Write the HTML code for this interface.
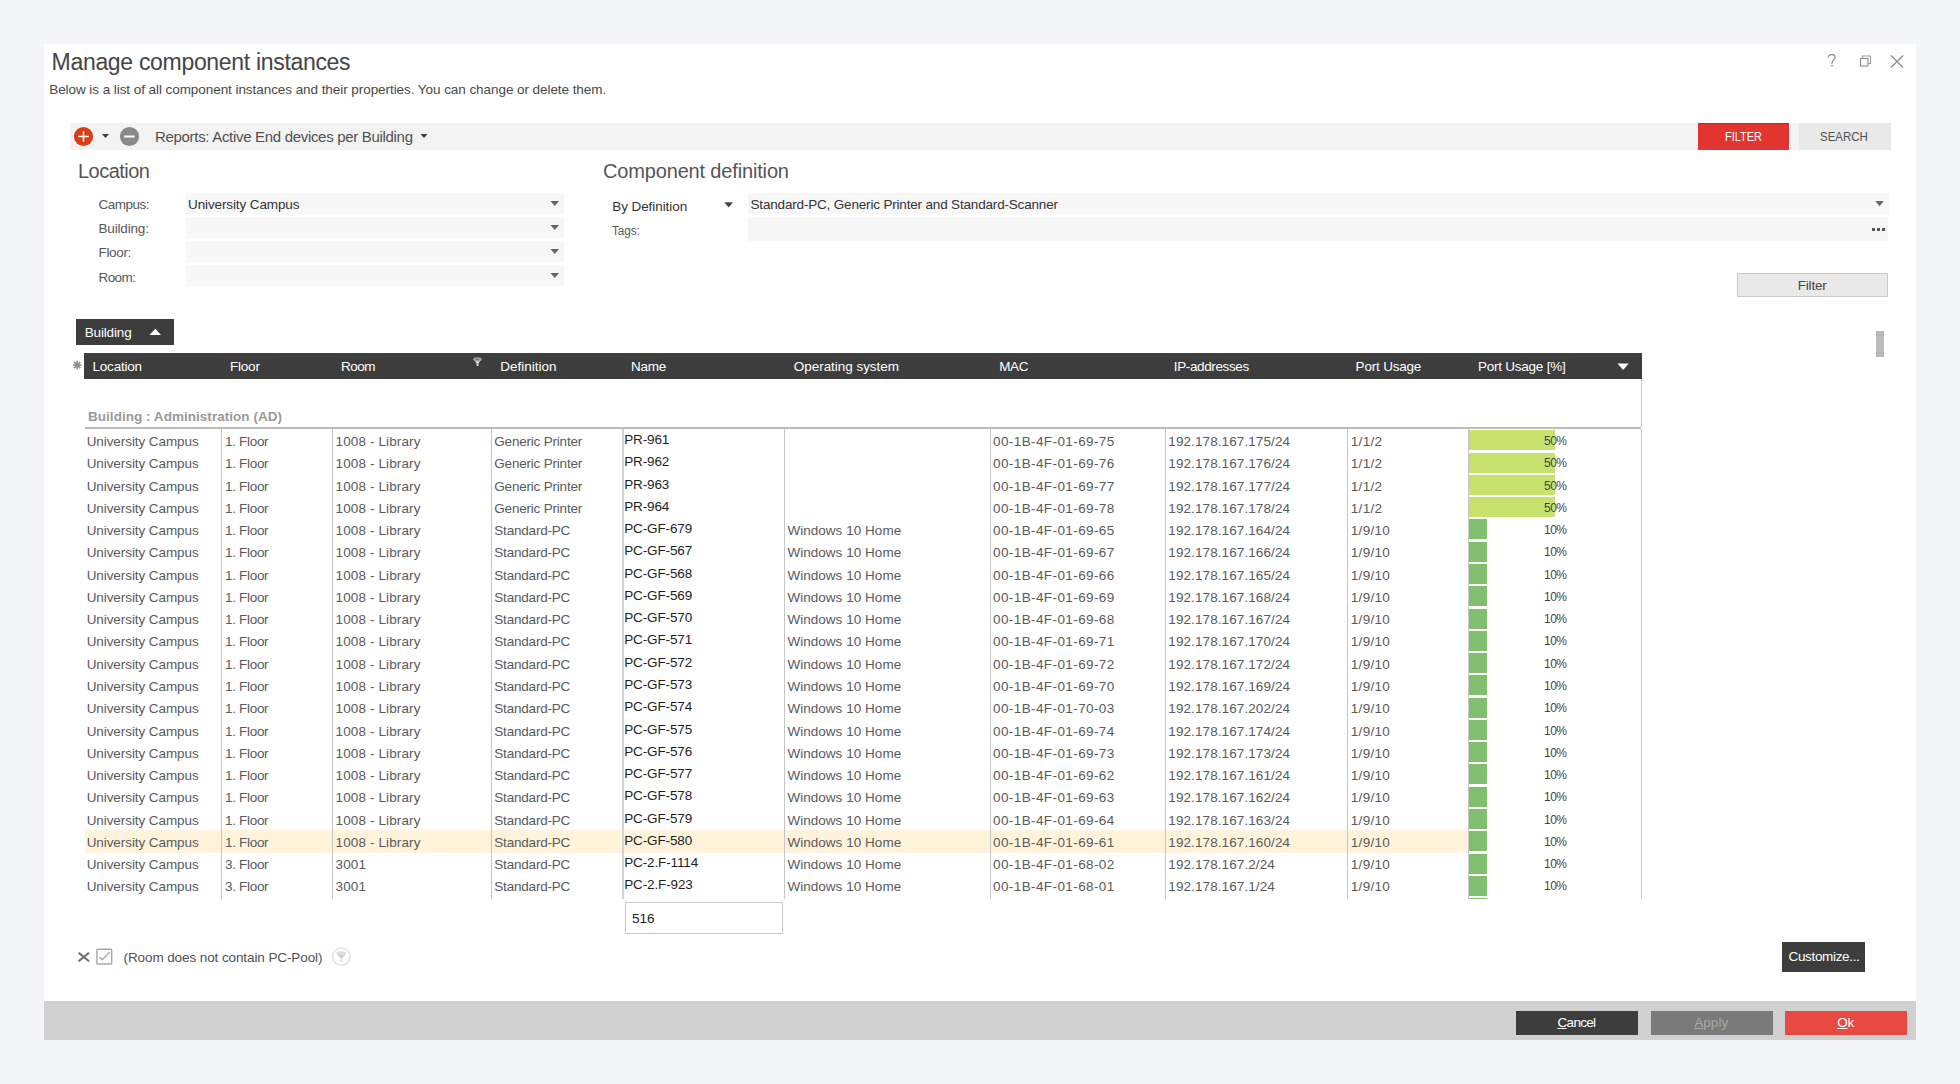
<!DOCTYPE html>
<html><head><meta charset="utf-8"><style>
html,body{margin:0;padding:0;}
body{width:1960px;height:1084px;background:#f4f5f9;position:relative;overflow:hidden;font-family:"Liberation Sans", sans-serif;}
.t{position:absolute;white-space:nowrap;}
.r{position:absolute;}
</style></head><body>
<div class="r" style="left:44px;top:44px;width:1872px;height:996px;background:#ffffff;"></div>
<div class="t" style="left:51.6px;top:51.00px;font-size:23px;line-height:23px;color:#454545;letter-spacing:-0.315px;font-weight:400;">Manage component instances</div>
<div class="t" style="left:49.2px;top:83.00px;font-size:13.5px;line-height:13.5px;color:#484848;letter-spacing:-0.062px;font-weight:400;">Below is a list of all component instances and their properties. You can change or delete them.</div>
<svg class="r" style="left:1820px;top:48px" width="100" height="26" viewBox="0 0 100 26"><path d="M8.3 9.4 C8.3 7.5 9.9 6.6 11.7 6.6 C13.5 6.6 15.1 7.6 15.1 9.4 C15.1 11.7 12 12.1 12 15 L12 15.8" fill="none" stroke="#8a8a8a" stroke-width="1.25"/><circle cx="12" cy="17.6" r="0.85" fill="#8a8a8a"/><rect x="40.5" y="10.5" width="7.5" height="7.5" fill="none" stroke="#8a8a8a" stroke-width="1.1"/><path d="M42.5 10.5 V8 H50.5 V15.5 H48" fill="none" stroke="#9a9a9a" stroke-width="1.1"/><path d="M71 7.5 L83 19.5 M83 7.5 L71 19.5" stroke="#8a8a8a" stroke-width="1.3"/></svg>
<div class="r" style="left:70px;top:123px;width:1821px;height:27px;background:#f3f3f3;"></div>
<svg class="r" style="left:70px;top:123px" width="370" height="27" viewBox="0 0 370 27"><circle cx="13.5" cy="13.5" r="9.6" fill="#dc3e14"/><path d="M8.2 13.5 H18.8 M13.5 8.2 V18.8" stroke="#fff" stroke-width="1.5"/><path d="M32 11 L39 11 L35.5 15 Z" fill="#3a3a3a"/><circle cx="59.5" cy="13.5" r="9.6" fill="#8a8a8a"/><path d="M54.2 13.5 H64.6" stroke="#fff" stroke-width="2"/></svg>
<div class="t" style="left:155.0px;top:129.00px;font-size:15px;line-height:15px;color:#505050;letter-spacing:-0.312px;font-weight:400;">Reports: Active End devices per Building</div>
<svg class="r" style="left:418px;top:130px" width="12" height="10"><path d="M2.5 4 L9.5 4 L6 8 Z" fill="#3a3a3a"/></svg>
<div class="r" style="left:1698px;top:123px;width:91px;height:27px;background:#e3352f;border-top:1px solid #b52a25;box-sizing:border-box"></div>
<div class="t" style="left:1724.8px;top:130.00px;font-size:13.5px;line-height:13.5px;color:#ffffff;letter-spacing:0.000px;font-weight:400;transform:scaleX(0.8129);transform-origin:0 0;">FILTER</div>
<div class="r" style="left:1799px;top:123px;width:92px;height:27px;background:#e9e9e9;"></div>
<div class="t" style="left:1819.7px;top:130.00px;font-size:13.5px;line-height:13.5px;color:#505050;letter-spacing:0.000px;font-weight:400;transform:scaleX(0.8478);transform-origin:0 0;">SEARCH</div>
<div class="t" style="left:78.0px;top:161.00px;font-size:20px;line-height:20px;color:#555;letter-spacing:-0.518px;font-weight:400;">Location</div>
<div class="t" style="left:98.5px;top:198.00px;font-size:13.5px;line-height:13.5px;color:#585858;letter-spacing:-0.489px;font-weight:400;">Campus:</div>
<div class="r" style="left:186px;top:193px;width:378px;height:21px;background:#f7f7f7;"></div>
<svg class="r" style="left:548px;top:196.5px" width="14" height="12"><path d="M2.5 4 L11 4 L6.75 9 Z" fill="#666"/></svg>
<div class="t" style="left:98.5px;top:222.00px;font-size:13.5px;line-height:13.5px;color:#585858;letter-spacing:-0.175px;font-weight:400;">Building:</div>
<div class="r" style="left:186px;top:217px;width:378px;height:21px;background:#f7f7f7;"></div>
<svg class="r" style="left:548px;top:220.5px" width="14" height="12"><path d="M2.5 4 L11 4 L6.75 9 Z" fill="#666"/></svg>
<div class="t" style="left:98.5px;top:246.00px;font-size:13.5px;line-height:13.5px;color:#585858;letter-spacing:-0.343px;font-weight:400;">Floor:</div>
<div class="r" style="left:186px;top:241px;width:378px;height:21px;background:#f7f7f7;"></div>
<svg class="r" style="left:548px;top:244.5px" width="14" height="12"><path d="M2.5 4 L11 4 L6.75 9 Z" fill="#666"/></svg>
<div class="t" style="left:98.5px;top:271.00px;font-size:13.5px;line-height:13.5px;color:#585858;letter-spacing:-0.591px;font-weight:400;">Room:</div>
<div class="r" style="left:186px;top:265px;width:378px;height:21px;background:#f7f7f7;"></div>
<svg class="r" style="left:548px;top:268.5px" width="14" height="12"><path d="M2.5 4 L11 4 L6.75 9 Z" fill="#666"/></svg>
<div class="t" style="left:188.0px;top:198.00px;font-size:13.5px;line-height:13.5px;color:#333;letter-spacing:-0.111px;font-weight:400;">University Campus</div>
<div class="t" style="left:603.0px;top:161.00px;font-size:20px;line-height:20px;color:#555;letter-spacing:-0.159px;font-weight:400;">Component definition</div>
<div class="t" style="left:612.2px;top:200.00px;font-size:13.5px;line-height:13.5px;color:#333;letter-spacing:-0.066px;font-weight:400;">By Definition</div>
<svg class="r" style="left:722px;top:199px" width="14" height="12"><path d="M2.3 3.2 L11 3.2 L6.65 8.5 Z" fill="#444"/></svg>
<div class="t" style="left:612.2px;top:224.00px;font-size:13.5px;line-height:13.5px;color:#585858;letter-spacing:0.000px;font-weight:400;transform:scaleX(0.8643);transform-origin:0 0;">Tags:</div>
<div class="r" style="left:748px;top:193px;width:1141px;height:21px;background:#f7f7f7;"></div>
<div class="t" style="left:750.5px;top:198.00px;font-size:13.5px;line-height:13.5px;color:#333;letter-spacing:-0.175px;font-weight:400;">Standard-PC, Generic Printer and Standard-Scanner</div>
<svg class="r" style="left:1873px;top:197.5px" width="14" height="12"><path d="M2.4 3 L10.7 3 L6.55 8.3 Z" fill="#666"/></svg>
<div class="r" style="left:748px;top:217px;width:1140px;height:24px;background:#f7f7f7;"></div>
<div class="r" style="left:1872px;top:228px;width:3px;height:3px;background:#555;"></div>
<div class="r" style="left:1877px;top:228px;width:3px;height:3px;background:#555;"></div>
<div class="r" style="left:1882px;top:228px;width:3px;height:3px;background:#555;"></div>
<div class="r" style="left:1737px;top:273px;width:151px;height:24px;background:#e9e9e9;border:1px solid #c8c8c8;box-sizing:border-box"></div>
<div class="t" style="left:1797.8px;top:279.00px;font-size:13.5px;line-height:13.5px;color:#444;letter-spacing:-0.220px;font-weight:400;">Filter</div>
<div class="r" style="left:1876px;top:331px;width:8px;height:26px;background:#bababa;"></div>
<div class="r" style="left:76px;top:319px;width:98px;height:26px;background:#3d3d3d;"></div>
<div class="t" style="left:84.7px;top:326.00px;font-size:13.5px;line-height:13.5px;color:#fff;letter-spacing:-0.150px;font-weight:400;">Building</div>
<svg class="r" style="left:148px;top:326px" width="14" height="12"><path d="M1.5 9 L13 9 L7.25 2.8 Z" fill="#fff"/></svg>
<svg class="r" style="left:72px;top:360px" width="11" height="11" viewBox="0 0 11 11"><path d="M5.2 0.8 V9.2 M0.9 5 H9.5 M2.1 1.9 L8.3 8.1 M2.1 8.1 L8.3 1.9" stroke="#8c8c8c" stroke-width="1.5"/><circle cx="5.2" cy="5" r="2.2" fill="#8c8c8c"/></svg>
<div class="r" style="left:84px;top:353px;width:1558px;height:26px;background:#3d3d3d;"></div>
<div class="t" style="left:92.5px;top:360.00px;font-size:13.5px;line-height:13.5px;color:#ffffff;letter-spacing:-0.207px;font-weight:400;">Location</div>
<div class="t" style="left:230.1px;top:360.00px;font-size:13.5px;line-height:13.5px;color:#ffffff;letter-spacing:-0.241px;font-weight:400;">Floor</div>
<div class="t" style="left:341.0px;top:360.00px;font-size:13.5px;line-height:13.5px;color:#ffffff;letter-spacing:-0.505px;font-weight:400;">Room</div>
<div class="t" style="left:500.3px;top:360.00px;font-size:13.5px;line-height:13.5px;color:#ffffff;letter-spacing:0.002px;font-weight:400;">Definition</div>
<div class="t" style="left:631.0px;top:360.00px;font-size:13.5px;line-height:13.5px;color:#ffffff;letter-spacing:-0.239px;font-weight:400;">Name</div>
<div class="t" style="left:793.8px;top:360.00px;font-size:13.5px;line-height:13.5px;color:#ffffff;letter-spacing:-0.040px;font-weight:400;">Operating system</div>
<div class="t" style="left:999.3px;top:360.00px;font-size:13.5px;line-height:13.5px;color:#ffffff;letter-spacing:-0.450px;font-weight:400;">MAC</div>
<div class="t" style="left:1173.8px;top:360.00px;font-size:13.5px;line-height:13.5px;color:#ffffff;letter-spacing:-0.377px;font-weight:400;">IP-addresses</div>
<div class="t" style="left:1355.6px;top:360.00px;font-size:13.5px;line-height:13.5px;color:#ffffff;letter-spacing:-0.194px;font-weight:400;">Port Usage</div>
<div class="t" style="left:1477.9px;top:360.00px;font-size:13.5px;line-height:13.5px;color:#ffffff;letter-spacing:-0.231px;font-weight:400;">Port Usage [%]</div>
<svg class="r" style="left:466px;top:353px" width="24" height="18" viewBox="0 0 24 18"><path d="M7.3 6.3 Q11.5 7.5 15.7 6.3 L12.6 10 L10.4 10 Z" fill="#dcdcdc"/><ellipse cx="11.5" cy="6.2" rx="4.3" ry="2" fill="#9c9c9c"/><ellipse cx="11.5" cy="6.3" rx="1.5" ry="0.6" fill="#6a6a6a"/><rect x="10.6" y="9" width="1.9" height="4" fill="#dedede"/></svg>
<svg class="r" style="left:1615px;top:361px" width="16" height="12"><path d="M2.5 2.5 L13.7 2.5 L8.1 9 Z" fill="#fff"/></svg>
<div class="t" style="left:88.0px;top:410.00px;font-size:13.5px;line-height:13.5px;color:#9a9a9a;letter-spacing:0.035px;font-weight:700;">Building : Administration (AD)</div>
<div class="r" style="left:85px;top:427px;width:1556px;height:2px;background:#bcbcbc;"></div>
<div class="r" style="left:1641px;top:379px;width:1px;height:48px;background:#c6c6c6;"></div>
<div class="r" style="left:85px;top:830px;width:1384px;height:23px;background:#fff4db;"></div>
<div class="r" style="left:221px;top:429px;width:1px;height:470px;background:#c6c6c6;"></div>
<div class="r" style="left:332px;top:429px;width:1px;height:470px;background:#c6c6c6;"></div>
<div class="r" style="left:491px;top:429px;width:1px;height:470px;background:#c6c6c6;"></div>
<div class="r" style="left:784px;top:429px;width:1px;height:470px;background:#c6c6c6;"></div>
<div class="r" style="left:990px;top:429px;width:1px;height:470px;background:#c6c6c6;"></div>
<div class="r" style="left:1165px;top:429px;width:1px;height:470px;background:#c6c6c6;"></div>
<div class="r" style="left:1347px;top:429px;width:1px;height:470px;background:#c6c6c6;"></div>
<div class="r" style="left:1468px;top:429px;width:1px;height:470px;background:#c6c6c6;"></div>
<div class="r" style="left:1641px;top:429px;width:1px;height:470px;background:#c6c6c6;"></div>
<div class="r" style="left:622px;top:429px;width:2px;height:470px;background:#d4d4d4;"></div>
<div class="r" style="left:1469px;top:430px;width:86px;height:20px;background:#c8e26e;"></div>
<div class="t" style="left:86.7px;top:435.00px;font-size:13.5px;line-height:13.5px;color:#5a5a5a;letter-spacing:-0.080px;font-weight:400;">University Campus</div>
<div class="t" style="left:225.0px;top:435.00px;font-size:13.5px;line-height:13.5px;color:#5a5a5a;letter-spacing:-0.312px;font-weight:400;">1. Floor</div>
<div class="t" style="left:335.5px;top:435.00px;font-size:13.5px;line-height:13.5px;color:#5a5a5a;letter-spacing:0.131px;font-weight:400;">1008 - Library</div>
<div class="t" style="left:494.3px;top:435.00px;font-size:13.5px;line-height:13.5px;color:#5a5a5a;letter-spacing:-0.200px;font-weight:400;">Generic Printer</div>
<div class="t" style="left:624.2px;top:433.00px;font-size:13.5px;line-height:13.5px;color:#1e1e1e;letter-spacing:-0.129px;font-weight:400;">PR-961</div>
<div class="t" style="left:993.0px;top:435.00px;font-size:13.5px;line-height:13.5px;color:#5a5a5a;letter-spacing:0.405px;font-weight:400;">00-1B-4F-01-69-75</div>
<div class="t" style="left:1168.3px;top:435.00px;font-size:13.5px;line-height:13.5px;color:#5a5a5a;letter-spacing:0.093px;font-weight:400;">192.178.167.175/24</div>
<div class="t" style="left:1350.8px;top:435.00px;font-size:13.5px;line-height:13.5px;color:#5a5a5a;letter-spacing:0.292px;font-weight:400;">1/1/2</div>
<div class="t" style="left:1500px;width:66.5px;text-align:right;top:435px;font-size:12px;line-height:12px;color:#444;letter-spacing:-0.5px">50%</div>
<div class="r" style="left:1469px;top:453px;width:86px;height:20px;background:#c8e26e;"></div>
<div class="t" style="left:86.7px;top:457.00px;font-size:13.5px;line-height:13.5px;color:#5a5a5a;letter-spacing:-0.080px;font-weight:400;">University Campus</div>
<div class="t" style="left:225.0px;top:457.00px;font-size:13.5px;line-height:13.5px;color:#5a5a5a;letter-spacing:-0.312px;font-weight:400;">1. Floor</div>
<div class="t" style="left:335.5px;top:457.00px;font-size:13.5px;line-height:13.5px;color:#5a5a5a;letter-spacing:0.131px;font-weight:400;">1008 - Library</div>
<div class="t" style="left:494.3px;top:457.00px;font-size:13.5px;line-height:13.5px;color:#5a5a5a;letter-spacing:-0.200px;font-weight:400;">Generic Printer</div>
<div class="t" style="left:624.2px;top:455.00px;font-size:13.5px;line-height:13.5px;color:#1e1e1e;letter-spacing:-0.129px;font-weight:400;">PR-962</div>
<div class="t" style="left:993.0px;top:457.00px;font-size:13.5px;line-height:13.5px;color:#5a5a5a;letter-spacing:0.405px;font-weight:400;">00-1B-4F-01-69-76</div>
<div class="t" style="left:1168.3px;top:457.00px;font-size:13.5px;line-height:13.5px;color:#5a5a5a;letter-spacing:0.093px;font-weight:400;">192.178.167.176/24</div>
<div class="t" style="left:1350.8px;top:457.00px;font-size:13.5px;line-height:13.5px;color:#5a5a5a;letter-spacing:0.292px;font-weight:400;">1/1/2</div>
<div class="t" style="left:1500px;width:66.5px;text-align:right;top:457px;font-size:12px;line-height:12px;color:#444;letter-spacing:-0.5px">50%</div>
<div class="r" style="left:1469px;top:475px;width:86px;height:20px;background:#c8e26e;"></div>
<div class="t" style="left:86.7px;top:480.00px;font-size:13.5px;line-height:13.5px;color:#5a5a5a;letter-spacing:-0.080px;font-weight:400;">University Campus</div>
<div class="t" style="left:225.0px;top:480.00px;font-size:13.5px;line-height:13.5px;color:#5a5a5a;letter-spacing:-0.312px;font-weight:400;">1. Floor</div>
<div class="t" style="left:335.5px;top:480.00px;font-size:13.5px;line-height:13.5px;color:#5a5a5a;letter-spacing:0.131px;font-weight:400;">1008 - Library</div>
<div class="t" style="left:494.3px;top:480.00px;font-size:13.5px;line-height:13.5px;color:#5a5a5a;letter-spacing:-0.200px;font-weight:400;">Generic Printer</div>
<div class="t" style="left:624.2px;top:478.00px;font-size:13.5px;line-height:13.5px;color:#1e1e1e;letter-spacing:-0.129px;font-weight:400;">PR-963</div>
<div class="t" style="left:993.0px;top:480.00px;font-size:13.5px;line-height:13.5px;color:#5a5a5a;letter-spacing:0.405px;font-weight:400;">00-1B-4F-01-69-77</div>
<div class="t" style="left:1168.3px;top:480.00px;font-size:13.5px;line-height:13.5px;color:#5a5a5a;letter-spacing:0.093px;font-weight:400;">192.178.167.177/24</div>
<div class="t" style="left:1350.8px;top:480.00px;font-size:13.5px;line-height:13.5px;color:#5a5a5a;letter-spacing:0.292px;font-weight:400;">1/1/2</div>
<div class="t" style="left:1500px;width:66.5px;text-align:right;top:480px;font-size:12px;line-height:12px;color:#444;letter-spacing:-0.5px">50%</div>
<div class="r" style="left:1469px;top:497px;width:86px;height:20px;background:#c8e26e;"></div>
<div class="t" style="left:86.7px;top:502.00px;font-size:13.5px;line-height:13.5px;color:#5a5a5a;letter-spacing:-0.080px;font-weight:400;">University Campus</div>
<div class="t" style="left:225.0px;top:502.00px;font-size:13.5px;line-height:13.5px;color:#5a5a5a;letter-spacing:-0.312px;font-weight:400;">1. Floor</div>
<div class="t" style="left:335.5px;top:502.00px;font-size:13.5px;line-height:13.5px;color:#5a5a5a;letter-spacing:0.131px;font-weight:400;">1008 - Library</div>
<div class="t" style="left:494.3px;top:502.00px;font-size:13.5px;line-height:13.5px;color:#5a5a5a;letter-spacing:-0.200px;font-weight:400;">Generic Printer</div>
<div class="t" style="left:624.2px;top:500.00px;font-size:13.5px;line-height:13.5px;color:#1e1e1e;letter-spacing:-0.129px;font-weight:400;">PR-964</div>
<div class="t" style="left:993.0px;top:502.00px;font-size:13.5px;line-height:13.5px;color:#5a5a5a;letter-spacing:0.405px;font-weight:400;">00-1B-4F-01-69-78</div>
<div class="t" style="left:1168.3px;top:502.00px;font-size:13.5px;line-height:13.5px;color:#5a5a5a;letter-spacing:0.093px;font-weight:400;">192.178.167.178/24</div>
<div class="t" style="left:1350.8px;top:502.00px;font-size:13.5px;line-height:13.5px;color:#5a5a5a;letter-spacing:0.292px;font-weight:400;">1/1/2</div>
<div class="t" style="left:1500px;width:66.5px;text-align:right;top:502px;font-size:12px;line-height:12px;color:#444;letter-spacing:-0.5px">50%</div>
<div class="r" style="left:1469px;top:519px;width:18px;height:20px;background:#7fbf6e;"></div>
<div class="t" style="left:86.7px;top:524.00px;font-size:13.5px;line-height:13.5px;color:#5a5a5a;letter-spacing:-0.080px;font-weight:400;">University Campus</div>
<div class="t" style="left:225.0px;top:524.00px;font-size:13.5px;line-height:13.5px;color:#5a5a5a;letter-spacing:-0.312px;font-weight:400;">1. Floor</div>
<div class="t" style="left:335.5px;top:524.00px;font-size:13.5px;line-height:13.5px;color:#5a5a5a;letter-spacing:0.131px;font-weight:400;">1008 - Library</div>
<div class="t" style="left:494.3px;top:524.00px;font-size:13.5px;line-height:13.5px;color:#5a5a5a;letter-spacing:-0.200px;font-weight:400;">Standard-PC</div>
<div class="t" style="left:624.2px;top:522.00px;font-size:13.5px;line-height:13.5px;color:#1e1e1e;letter-spacing:-0.129px;font-weight:400;">PC-GF-679</div>
<div class="t" style="left:787.4px;top:524.00px;font-size:13.5px;line-height:13.5px;color:#5a5a5a;letter-spacing:0.036px;font-weight:400;">Windows 10 Home</div>
<div class="t" style="left:993.0px;top:524.00px;font-size:13.5px;line-height:13.5px;color:#5a5a5a;letter-spacing:0.405px;font-weight:400;">00-1B-4F-01-69-65</div>
<div class="t" style="left:1168.3px;top:524.00px;font-size:13.5px;line-height:13.5px;color:#5a5a5a;letter-spacing:0.093px;font-weight:400;">192.178.167.164/24</div>
<div class="t" style="left:1350.8px;top:524.00px;font-size:13.5px;line-height:13.5px;color:#5a5a5a;letter-spacing:0.292px;font-weight:400;">1/9/10</div>
<div class="t" style="left:1500px;width:66.5px;text-align:right;top:524px;font-size:12px;line-height:12px;color:#444;letter-spacing:-0.5px">10%</div>
<div class="r" style="left:1469px;top:542px;width:18px;height:20px;background:#7fbf6e;"></div>
<div class="t" style="left:86.7px;top:546.00px;font-size:13.5px;line-height:13.5px;color:#5a5a5a;letter-spacing:-0.080px;font-weight:400;">University Campus</div>
<div class="t" style="left:225.0px;top:546.00px;font-size:13.5px;line-height:13.5px;color:#5a5a5a;letter-spacing:-0.312px;font-weight:400;">1. Floor</div>
<div class="t" style="left:335.5px;top:546.00px;font-size:13.5px;line-height:13.5px;color:#5a5a5a;letter-spacing:0.131px;font-weight:400;">1008 - Library</div>
<div class="t" style="left:494.3px;top:546.00px;font-size:13.5px;line-height:13.5px;color:#5a5a5a;letter-spacing:-0.200px;font-weight:400;">Standard-PC</div>
<div class="t" style="left:624.2px;top:544.00px;font-size:13.5px;line-height:13.5px;color:#1e1e1e;letter-spacing:-0.129px;font-weight:400;">PC-GF-567</div>
<div class="t" style="left:787.4px;top:546.00px;font-size:13.5px;line-height:13.5px;color:#5a5a5a;letter-spacing:0.036px;font-weight:400;">Windows 10 Home</div>
<div class="t" style="left:993.0px;top:546.00px;font-size:13.5px;line-height:13.5px;color:#5a5a5a;letter-spacing:0.405px;font-weight:400;">00-1B-4F-01-69-67</div>
<div class="t" style="left:1168.3px;top:546.00px;font-size:13.5px;line-height:13.5px;color:#5a5a5a;letter-spacing:0.093px;font-weight:400;">192.178.167.166/24</div>
<div class="t" style="left:1350.8px;top:546.00px;font-size:13.5px;line-height:13.5px;color:#5a5a5a;letter-spacing:0.292px;font-weight:400;">1/9/10</div>
<div class="t" style="left:1500px;width:66.5px;text-align:right;top:546px;font-size:12px;line-height:12px;color:#444;letter-spacing:-0.5px">10%</div>
<div class="r" style="left:1469px;top:564px;width:18px;height:20px;background:#7fbf6e;"></div>
<div class="t" style="left:86.7px;top:569.00px;font-size:13.5px;line-height:13.5px;color:#5a5a5a;letter-spacing:-0.080px;font-weight:400;">University Campus</div>
<div class="t" style="left:225.0px;top:569.00px;font-size:13.5px;line-height:13.5px;color:#5a5a5a;letter-spacing:-0.312px;font-weight:400;">1. Floor</div>
<div class="t" style="left:335.5px;top:569.00px;font-size:13.5px;line-height:13.5px;color:#5a5a5a;letter-spacing:0.131px;font-weight:400;">1008 - Library</div>
<div class="t" style="left:494.3px;top:569.00px;font-size:13.5px;line-height:13.5px;color:#5a5a5a;letter-spacing:-0.200px;font-weight:400;">Standard-PC</div>
<div class="t" style="left:624.2px;top:567.00px;font-size:13.5px;line-height:13.5px;color:#1e1e1e;letter-spacing:-0.129px;font-weight:400;">PC-GF-568</div>
<div class="t" style="left:787.4px;top:569.00px;font-size:13.5px;line-height:13.5px;color:#5a5a5a;letter-spacing:0.036px;font-weight:400;">Windows 10 Home</div>
<div class="t" style="left:993.0px;top:569.00px;font-size:13.5px;line-height:13.5px;color:#5a5a5a;letter-spacing:0.405px;font-weight:400;">00-1B-4F-01-69-66</div>
<div class="t" style="left:1168.3px;top:569.00px;font-size:13.5px;line-height:13.5px;color:#5a5a5a;letter-spacing:0.093px;font-weight:400;">192.178.167.165/24</div>
<div class="t" style="left:1350.8px;top:569.00px;font-size:13.5px;line-height:13.5px;color:#5a5a5a;letter-spacing:0.292px;font-weight:400;">1/9/10</div>
<div class="t" style="left:1500px;width:66.5px;text-align:right;top:569px;font-size:12px;line-height:12px;color:#444;letter-spacing:-0.5px">10%</div>
<div class="r" style="left:1469px;top:586px;width:18px;height:20px;background:#7fbf6e;"></div>
<div class="t" style="left:86.7px;top:591.00px;font-size:13.5px;line-height:13.5px;color:#5a5a5a;letter-spacing:-0.080px;font-weight:400;">University Campus</div>
<div class="t" style="left:225.0px;top:591.00px;font-size:13.5px;line-height:13.5px;color:#5a5a5a;letter-spacing:-0.312px;font-weight:400;">1. Floor</div>
<div class="t" style="left:335.5px;top:591.00px;font-size:13.5px;line-height:13.5px;color:#5a5a5a;letter-spacing:0.131px;font-weight:400;">1008 - Library</div>
<div class="t" style="left:494.3px;top:591.00px;font-size:13.5px;line-height:13.5px;color:#5a5a5a;letter-spacing:-0.200px;font-weight:400;">Standard-PC</div>
<div class="t" style="left:624.2px;top:589.00px;font-size:13.5px;line-height:13.5px;color:#1e1e1e;letter-spacing:-0.129px;font-weight:400;">PC-GF-569</div>
<div class="t" style="left:787.4px;top:591.00px;font-size:13.5px;line-height:13.5px;color:#5a5a5a;letter-spacing:0.036px;font-weight:400;">Windows 10 Home</div>
<div class="t" style="left:993.0px;top:591.00px;font-size:13.5px;line-height:13.5px;color:#5a5a5a;letter-spacing:0.405px;font-weight:400;">00-1B-4F-01-69-69</div>
<div class="t" style="left:1168.3px;top:591.00px;font-size:13.5px;line-height:13.5px;color:#5a5a5a;letter-spacing:0.093px;font-weight:400;">192.178.167.168/24</div>
<div class="t" style="left:1350.8px;top:591.00px;font-size:13.5px;line-height:13.5px;color:#5a5a5a;letter-spacing:0.292px;font-weight:400;">1/9/10</div>
<div class="t" style="left:1500px;width:66.5px;text-align:right;top:591px;font-size:12px;line-height:12px;color:#444;letter-spacing:-0.5px">10%</div>
<div class="r" style="left:1469px;top:609px;width:18px;height:20px;background:#7fbf6e;"></div>
<div class="t" style="left:86.7px;top:613.00px;font-size:13.5px;line-height:13.5px;color:#5a5a5a;letter-spacing:-0.080px;font-weight:400;">University Campus</div>
<div class="t" style="left:225.0px;top:613.00px;font-size:13.5px;line-height:13.5px;color:#5a5a5a;letter-spacing:-0.312px;font-weight:400;">1. Floor</div>
<div class="t" style="left:335.5px;top:613.00px;font-size:13.5px;line-height:13.5px;color:#5a5a5a;letter-spacing:0.131px;font-weight:400;">1008 - Library</div>
<div class="t" style="left:494.3px;top:613.00px;font-size:13.5px;line-height:13.5px;color:#5a5a5a;letter-spacing:-0.200px;font-weight:400;">Standard-PC</div>
<div class="t" style="left:624.2px;top:611.00px;font-size:13.5px;line-height:13.5px;color:#1e1e1e;letter-spacing:-0.129px;font-weight:400;">PC-GF-570</div>
<div class="t" style="left:787.4px;top:613.00px;font-size:13.5px;line-height:13.5px;color:#5a5a5a;letter-spacing:0.036px;font-weight:400;">Windows 10 Home</div>
<div class="t" style="left:993.0px;top:613.00px;font-size:13.5px;line-height:13.5px;color:#5a5a5a;letter-spacing:0.405px;font-weight:400;">00-1B-4F-01-69-68</div>
<div class="t" style="left:1168.3px;top:613.00px;font-size:13.5px;line-height:13.5px;color:#5a5a5a;letter-spacing:0.093px;font-weight:400;">192.178.167.167/24</div>
<div class="t" style="left:1350.8px;top:613.00px;font-size:13.5px;line-height:13.5px;color:#5a5a5a;letter-spacing:0.292px;font-weight:400;">1/9/10</div>
<div class="t" style="left:1500px;width:66.5px;text-align:right;top:613px;font-size:12px;line-height:12px;color:#444;letter-spacing:-0.5px">10%</div>
<div class="r" style="left:1469px;top:631px;width:18px;height:20px;background:#7fbf6e;"></div>
<div class="t" style="left:86.7px;top:635.00px;font-size:13.5px;line-height:13.5px;color:#5a5a5a;letter-spacing:-0.080px;font-weight:400;">University Campus</div>
<div class="t" style="left:225.0px;top:635.00px;font-size:13.5px;line-height:13.5px;color:#5a5a5a;letter-spacing:-0.312px;font-weight:400;">1. Floor</div>
<div class="t" style="left:335.5px;top:635.00px;font-size:13.5px;line-height:13.5px;color:#5a5a5a;letter-spacing:0.131px;font-weight:400;">1008 - Library</div>
<div class="t" style="left:494.3px;top:635.00px;font-size:13.5px;line-height:13.5px;color:#5a5a5a;letter-spacing:-0.200px;font-weight:400;">Standard-PC</div>
<div class="t" style="left:624.2px;top:633.00px;font-size:13.5px;line-height:13.5px;color:#1e1e1e;letter-spacing:-0.129px;font-weight:400;">PC-GF-571</div>
<div class="t" style="left:787.4px;top:635.00px;font-size:13.5px;line-height:13.5px;color:#5a5a5a;letter-spacing:0.036px;font-weight:400;">Windows 10 Home</div>
<div class="t" style="left:993.0px;top:635.00px;font-size:13.5px;line-height:13.5px;color:#5a5a5a;letter-spacing:0.405px;font-weight:400;">00-1B-4F-01-69-71</div>
<div class="t" style="left:1168.3px;top:635.00px;font-size:13.5px;line-height:13.5px;color:#5a5a5a;letter-spacing:0.093px;font-weight:400;">192.178.167.170/24</div>
<div class="t" style="left:1350.8px;top:635.00px;font-size:13.5px;line-height:13.5px;color:#5a5a5a;letter-spacing:0.292px;font-weight:400;">1/9/10</div>
<div class="t" style="left:1500px;width:66.5px;text-align:right;top:635px;font-size:12px;line-height:12px;color:#444;letter-spacing:-0.5px">10%</div>
<div class="r" style="left:1469px;top:653px;width:18px;height:20px;background:#7fbf6e;"></div>
<div class="t" style="left:86.7px;top:658.00px;font-size:13.5px;line-height:13.5px;color:#5a5a5a;letter-spacing:-0.080px;font-weight:400;">University Campus</div>
<div class="t" style="left:225.0px;top:658.00px;font-size:13.5px;line-height:13.5px;color:#5a5a5a;letter-spacing:-0.312px;font-weight:400;">1. Floor</div>
<div class="t" style="left:335.5px;top:658.00px;font-size:13.5px;line-height:13.5px;color:#5a5a5a;letter-spacing:0.131px;font-weight:400;">1008 - Library</div>
<div class="t" style="left:494.3px;top:658.00px;font-size:13.5px;line-height:13.5px;color:#5a5a5a;letter-spacing:-0.200px;font-weight:400;">Standard-PC</div>
<div class="t" style="left:624.2px;top:656.00px;font-size:13.5px;line-height:13.5px;color:#1e1e1e;letter-spacing:-0.129px;font-weight:400;">PC-GF-572</div>
<div class="t" style="left:787.4px;top:658.00px;font-size:13.5px;line-height:13.5px;color:#5a5a5a;letter-spacing:0.036px;font-weight:400;">Windows 10 Home</div>
<div class="t" style="left:993.0px;top:658.00px;font-size:13.5px;line-height:13.5px;color:#5a5a5a;letter-spacing:0.405px;font-weight:400;">00-1B-4F-01-69-72</div>
<div class="t" style="left:1168.3px;top:658.00px;font-size:13.5px;line-height:13.5px;color:#5a5a5a;letter-spacing:0.093px;font-weight:400;">192.178.167.172/24</div>
<div class="t" style="left:1350.8px;top:658.00px;font-size:13.5px;line-height:13.5px;color:#5a5a5a;letter-spacing:0.292px;font-weight:400;">1/9/10</div>
<div class="t" style="left:1500px;width:66.5px;text-align:right;top:658px;font-size:12px;line-height:12px;color:#444;letter-spacing:-0.5px">10%</div>
<div class="r" style="left:1469px;top:675px;width:18px;height:20px;background:#7fbf6e;"></div>
<div class="t" style="left:86.7px;top:680.00px;font-size:13.5px;line-height:13.5px;color:#5a5a5a;letter-spacing:-0.080px;font-weight:400;">University Campus</div>
<div class="t" style="left:225.0px;top:680.00px;font-size:13.5px;line-height:13.5px;color:#5a5a5a;letter-spacing:-0.312px;font-weight:400;">1. Floor</div>
<div class="t" style="left:335.5px;top:680.00px;font-size:13.5px;line-height:13.5px;color:#5a5a5a;letter-spacing:0.131px;font-weight:400;">1008 - Library</div>
<div class="t" style="left:494.3px;top:680.00px;font-size:13.5px;line-height:13.5px;color:#5a5a5a;letter-spacing:-0.200px;font-weight:400;">Standard-PC</div>
<div class="t" style="left:624.2px;top:678.00px;font-size:13.5px;line-height:13.5px;color:#1e1e1e;letter-spacing:-0.129px;font-weight:400;">PC-GF-573</div>
<div class="t" style="left:787.4px;top:680.00px;font-size:13.5px;line-height:13.5px;color:#5a5a5a;letter-spacing:0.036px;font-weight:400;">Windows 10 Home</div>
<div class="t" style="left:993.0px;top:680.00px;font-size:13.5px;line-height:13.5px;color:#5a5a5a;letter-spacing:0.405px;font-weight:400;">00-1B-4F-01-69-70</div>
<div class="t" style="left:1168.3px;top:680.00px;font-size:13.5px;line-height:13.5px;color:#5a5a5a;letter-spacing:0.093px;font-weight:400;">192.178.167.169/24</div>
<div class="t" style="left:1350.8px;top:680.00px;font-size:13.5px;line-height:13.5px;color:#5a5a5a;letter-spacing:0.292px;font-weight:400;">1/9/10</div>
<div class="t" style="left:1500px;width:66.5px;text-align:right;top:680px;font-size:12px;line-height:12px;color:#444;letter-spacing:-0.5px">10%</div>
<div class="r" style="left:1469px;top:698px;width:18px;height:20px;background:#7fbf6e;"></div>
<div class="t" style="left:86.7px;top:702.00px;font-size:13.5px;line-height:13.5px;color:#5a5a5a;letter-spacing:-0.080px;font-weight:400;">University Campus</div>
<div class="t" style="left:225.0px;top:702.00px;font-size:13.5px;line-height:13.5px;color:#5a5a5a;letter-spacing:-0.312px;font-weight:400;">1. Floor</div>
<div class="t" style="left:335.5px;top:702.00px;font-size:13.5px;line-height:13.5px;color:#5a5a5a;letter-spacing:0.131px;font-weight:400;">1008 - Library</div>
<div class="t" style="left:494.3px;top:702.00px;font-size:13.5px;line-height:13.5px;color:#5a5a5a;letter-spacing:-0.200px;font-weight:400;">Standard-PC</div>
<div class="t" style="left:624.2px;top:700.00px;font-size:13.5px;line-height:13.5px;color:#1e1e1e;letter-spacing:-0.129px;font-weight:400;">PC-GF-574</div>
<div class="t" style="left:787.4px;top:702.00px;font-size:13.5px;line-height:13.5px;color:#5a5a5a;letter-spacing:0.036px;font-weight:400;">Windows 10 Home</div>
<div class="t" style="left:993.0px;top:702.00px;font-size:13.5px;line-height:13.5px;color:#5a5a5a;letter-spacing:0.405px;font-weight:400;">00-1B-4F-01-70-03</div>
<div class="t" style="left:1168.3px;top:702.00px;font-size:13.5px;line-height:13.5px;color:#5a5a5a;letter-spacing:0.093px;font-weight:400;">192.178.167.202/24</div>
<div class="t" style="left:1350.8px;top:702.00px;font-size:13.5px;line-height:13.5px;color:#5a5a5a;letter-spacing:0.292px;font-weight:400;">1/9/10</div>
<div class="t" style="left:1500px;width:66.5px;text-align:right;top:702px;font-size:12px;line-height:12px;color:#444;letter-spacing:-0.5px">10%</div>
<div class="r" style="left:1469px;top:720px;width:18px;height:20px;background:#7fbf6e;"></div>
<div class="t" style="left:86.7px;top:725.00px;font-size:13.5px;line-height:13.5px;color:#5a5a5a;letter-spacing:-0.080px;font-weight:400;">University Campus</div>
<div class="t" style="left:225.0px;top:725.00px;font-size:13.5px;line-height:13.5px;color:#5a5a5a;letter-spacing:-0.312px;font-weight:400;">1. Floor</div>
<div class="t" style="left:335.5px;top:725.00px;font-size:13.5px;line-height:13.5px;color:#5a5a5a;letter-spacing:0.131px;font-weight:400;">1008 - Library</div>
<div class="t" style="left:494.3px;top:725.00px;font-size:13.5px;line-height:13.5px;color:#5a5a5a;letter-spacing:-0.200px;font-weight:400;">Standard-PC</div>
<div class="t" style="left:624.2px;top:723.00px;font-size:13.5px;line-height:13.5px;color:#1e1e1e;letter-spacing:-0.129px;font-weight:400;">PC-GF-575</div>
<div class="t" style="left:787.4px;top:725.00px;font-size:13.5px;line-height:13.5px;color:#5a5a5a;letter-spacing:0.036px;font-weight:400;">Windows 10 Home</div>
<div class="t" style="left:993.0px;top:725.00px;font-size:13.5px;line-height:13.5px;color:#5a5a5a;letter-spacing:0.405px;font-weight:400;">00-1B-4F-01-69-74</div>
<div class="t" style="left:1168.3px;top:725.00px;font-size:13.5px;line-height:13.5px;color:#5a5a5a;letter-spacing:0.093px;font-weight:400;">192.178.167.174/24</div>
<div class="t" style="left:1350.8px;top:725.00px;font-size:13.5px;line-height:13.5px;color:#5a5a5a;letter-spacing:0.292px;font-weight:400;">1/9/10</div>
<div class="t" style="left:1500px;width:66.5px;text-align:right;top:725px;font-size:12px;line-height:12px;color:#444;letter-spacing:-0.5px">10%</div>
<div class="r" style="left:1469px;top:742px;width:18px;height:20px;background:#7fbf6e;"></div>
<div class="t" style="left:86.7px;top:747.00px;font-size:13.5px;line-height:13.5px;color:#5a5a5a;letter-spacing:-0.080px;font-weight:400;">University Campus</div>
<div class="t" style="left:225.0px;top:747.00px;font-size:13.5px;line-height:13.5px;color:#5a5a5a;letter-spacing:-0.312px;font-weight:400;">1. Floor</div>
<div class="t" style="left:335.5px;top:747.00px;font-size:13.5px;line-height:13.5px;color:#5a5a5a;letter-spacing:0.131px;font-weight:400;">1008 - Library</div>
<div class="t" style="left:494.3px;top:747.00px;font-size:13.5px;line-height:13.5px;color:#5a5a5a;letter-spacing:-0.200px;font-weight:400;">Standard-PC</div>
<div class="t" style="left:624.2px;top:745.00px;font-size:13.5px;line-height:13.5px;color:#1e1e1e;letter-spacing:-0.129px;font-weight:400;">PC-GF-576</div>
<div class="t" style="left:787.4px;top:747.00px;font-size:13.5px;line-height:13.5px;color:#5a5a5a;letter-spacing:0.036px;font-weight:400;">Windows 10 Home</div>
<div class="t" style="left:993.0px;top:747.00px;font-size:13.5px;line-height:13.5px;color:#5a5a5a;letter-spacing:0.405px;font-weight:400;">00-1B-4F-01-69-73</div>
<div class="t" style="left:1168.3px;top:747.00px;font-size:13.5px;line-height:13.5px;color:#5a5a5a;letter-spacing:0.093px;font-weight:400;">192.178.167.173/24</div>
<div class="t" style="left:1350.8px;top:747.00px;font-size:13.5px;line-height:13.5px;color:#5a5a5a;letter-spacing:0.292px;font-weight:400;">1/9/10</div>
<div class="t" style="left:1500px;width:66.5px;text-align:right;top:747px;font-size:12px;line-height:12px;color:#444;letter-spacing:-0.5px">10%</div>
<div class="r" style="left:1469px;top:764px;width:18px;height:20px;background:#7fbf6e;"></div>
<div class="t" style="left:86.7px;top:769.00px;font-size:13.5px;line-height:13.5px;color:#5a5a5a;letter-spacing:-0.080px;font-weight:400;">University Campus</div>
<div class="t" style="left:225.0px;top:769.00px;font-size:13.5px;line-height:13.5px;color:#5a5a5a;letter-spacing:-0.312px;font-weight:400;">1. Floor</div>
<div class="t" style="left:335.5px;top:769.00px;font-size:13.5px;line-height:13.5px;color:#5a5a5a;letter-spacing:0.131px;font-weight:400;">1008 - Library</div>
<div class="t" style="left:494.3px;top:769.00px;font-size:13.5px;line-height:13.5px;color:#5a5a5a;letter-spacing:-0.200px;font-weight:400;">Standard-PC</div>
<div class="t" style="left:624.2px;top:767.00px;font-size:13.5px;line-height:13.5px;color:#1e1e1e;letter-spacing:-0.129px;font-weight:400;">PC-GF-577</div>
<div class="t" style="left:787.4px;top:769.00px;font-size:13.5px;line-height:13.5px;color:#5a5a5a;letter-spacing:0.036px;font-weight:400;">Windows 10 Home</div>
<div class="t" style="left:993.0px;top:769.00px;font-size:13.5px;line-height:13.5px;color:#5a5a5a;letter-spacing:0.405px;font-weight:400;">00-1B-4F-01-69-62</div>
<div class="t" style="left:1168.3px;top:769.00px;font-size:13.5px;line-height:13.5px;color:#5a5a5a;letter-spacing:0.093px;font-weight:400;">192.178.167.161/24</div>
<div class="t" style="left:1350.8px;top:769.00px;font-size:13.5px;line-height:13.5px;color:#5a5a5a;letter-spacing:0.292px;font-weight:400;">1/9/10</div>
<div class="t" style="left:1500px;width:66.5px;text-align:right;top:769px;font-size:12px;line-height:12px;color:#444;letter-spacing:-0.5px">10%</div>
<div class="r" style="left:1469px;top:787px;width:18px;height:20px;background:#7fbf6e;"></div>
<div class="t" style="left:86.7px;top:791.00px;font-size:13.5px;line-height:13.5px;color:#5a5a5a;letter-spacing:-0.080px;font-weight:400;">University Campus</div>
<div class="t" style="left:225.0px;top:791.00px;font-size:13.5px;line-height:13.5px;color:#5a5a5a;letter-spacing:-0.312px;font-weight:400;">1. Floor</div>
<div class="t" style="left:335.5px;top:791.00px;font-size:13.5px;line-height:13.5px;color:#5a5a5a;letter-spacing:0.131px;font-weight:400;">1008 - Library</div>
<div class="t" style="left:494.3px;top:791.00px;font-size:13.5px;line-height:13.5px;color:#5a5a5a;letter-spacing:-0.200px;font-weight:400;">Standard-PC</div>
<div class="t" style="left:624.2px;top:789.00px;font-size:13.5px;line-height:13.5px;color:#1e1e1e;letter-spacing:-0.129px;font-weight:400;">PC-GF-578</div>
<div class="t" style="left:787.4px;top:791.00px;font-size:13.5px;line-height:13.5px;color:#5a5a5a;letter-spacing:0.036px;font-weight:400;">Windows 10 Home</div>
<div class="t" style="left:993.0px;top:791.00px;font-size:13.5px;line-height:13.5px;color:#5a5a5a;letter-spacing:0.405px;font-weight:400;">00-1B-4F-01-69-63</div>
<div class="t" style="left:1168.3px;top:791.00px;font-size:13.5px;line-height:13.5px;color:#5a5a5a;letter-spacing:0.093px;font-weight:400;">192.178.167.162/24</div>
<div class="t" style="left:1350.8px;top:791.00px;font-size:13.5px;line-height:13.5px;color:#5a5a5a;letter-spacing:0.292px;font-weight:400;">1/9/10</div>
<div class="t" style="left:1500px;width:66.5px;text-align:right;top:791px;font-size:12px;line-height:12px;color:#444;letter-spacing:-0.5px">10%</div>
<div class="r" style="left:1469px;top:809px;width:18px;height:20px;background:#7fbf6e;"></div>
<div class="t" style="left:86.7px;top:814.00px;font-size:13.5px;line-height:13.5px;color:#5a5a5a;letter-spacing:-0.080px;font-weight:400;">University Campus</div>
<div class="t" style="left:225.0px;top:814.00px;font-size:13.5px;line-height:13.5px;color:#5a5a5a;letter-spacing:-0.312px;font-weight:400;">1. Floor</div>
<div class="t" style="left:335.5px;top:814.00px;font-size:13.5px;line-height:13.5px;color:#5a5a5a;letter-spacing:0.131px;font-weight:400;">1008 - Library</div>
<div class="t" style="left:494.3px;top:814.00px;font-size:13.5px;line-height:13.5px;color:#5a5a5a;letter-spacing:-0.200px;font-weight:400;">Standard-PC</div>
<div class="t" style="left:624.2px;top:812.00px;font-size:13.5px;line-height:13.5px;color:#1e1e1e;letter-spacing:-0.129px;font-weight:400;">PC-GF-579</div>
<div class="t" style="left:787.4px;top:814.00px;font-size:13.5px;line-height:13.5px;color:#5a5a5a;letter-spacing:0.036px;font-weight:400;">Windows 10 Home</div>
<div class="t" style="left:993.0px;top:814.00px;font-size:13.5px;line-height:13.5px;color:#5a5a5a;letter-spacing:0.405px;font-weight:400;">00-1B-4F-01-69-64</div>
<div class="t" style="left:1168.3px;top:814.00px;font-size:13.5px;line-height:13.5px;color:#5a5a5a;letter-spacing:0.093px;font-weight:400;">192.178.167.163/24</div>
<div class="t" style="left:1350.8px;top:814.00px;font-size:13.5px;line-height:13.5px;color:#5a5a5a;letter-spacing:0.292px;font-weight:400;">1/9/10</div>
<div class="t" style="left:1500px;width:66.5px;text-align:right;top:814px;font-size:12px;line-height:12px;color:#444;letter-spacing:-0.5px">10%</div>
<div class="r" style="left:1469px;top:831px;width:18px;height:20px;background:#7fbf6e;"></div>
<div class="t" style="left:86.7px;top:836.00px;font-size:13.5px;line-height:13.5px;color:#5a5a5a;letter-spacing:-0.080px;font-weight:400;">University Campus</div>
<div class="t" style="left:225.0px;top:836.00px;font-size:13.5px;line-height:13.5px;color:#5a5a5a;letter-spacing:-0.312px;font-weight:400;">1. Floor</div>
<div class="t" style="left:335.5px;top:836.00px;font-size:13.5px;line-height:13.5px;color:#5a5a5a;letter-spacing:0.131px;font-weight:400;">1008 - Library</div>
<div class="t" style="left:494.3px;top:836.00px;font-size:13.5px;line-height:13.5px;color:#5a5a5a;letter-spacing:-0.200px;font-weight:400;">Standard-PC</div>
<div class="t" style="left:624.2px;top:834.00px;font-size:13.5px;line-height:13.5px;color:#1e1e1e;letter-spacing:-0.129px;font-weight:400;">PC-GF-580</div>
<div class="t" style="left:787.4px;top:836.00px;font-size:13.5px;line-height:13.5px;color:#5a5a5a;letter-spacing:0.036px;font-weight:400;">Windows 10 Home</div>
<div class="t" style="left:993.0px;top:836.00px;font-size:13.5px;line-height:13.5px;color:#5a5a5a;letter-spacing:0.405px;font-weight:400;">00-1B-4F-01-69-61</div>
<div class="t" style="left:1168.3px;top:836.00px;font-size:13.5px;line-height:13.5px;color:#5a5a5a;letter-spacing:0.093px;font-weight:400;">192.178.167.160/24</div>
<div class="t" style="left:1350.8px;top:836.00px;font-size:13.5px;line-height:13.5px;color:#5a5a5a;letter-spacing:0.292px;font-weight:400;">1/9/10</div>
<div class="t" style="left:1500px;width:66.5px;text-align:right;top:836px;font-size:12px;line-height:12px;color:#444;letter-spacing:-0.5px">10%</div>
<div class="r" style="left:1469px;top:854px;width:18px;height:20px;background:#7fbf6e;"></div>
<div class="t" style="left:86.7px;top:858.00px;font-size:13.5px;line-height:13.5px;color:#5a5a5a;letter-spacing:-0.080px;font-weight:400;">University Campus</div>
<div class="t" style="left:225.0px;top:858.00px;font-size:13.5px;line-height:13.5px;color:#5a5a5a;letter-spacing:-0.312px;font-weight:400;">3. Floor</div>
<div class="t" style="left:335.5px;top:858.00px;font-size:13.5px;line-height:13.5px;color:#5a5a5a;letter-spacing:0.131px;font-weight:400;">3001</div>
<div class="t" style="left:494.3px;top:858.00px;font-size:13.5px;line-height:13.5px;color:#5a5a5a;letter-spacing:-0.200px;font-weight:400;">Standard-PC</div>
<div class="t" style="left:624.2px;top:856.00px;font-size:13.5px;line-height:13.5px;color:#1e1e1e;letter-spacing:-0.129px;font-weight:400;">PC-2.F-1114</div>
<div class="t" style="left:787.4px;top:858.00px;font-size:13.5px;line-height:13.5px;color:#5a5a5a;letter-spacing:0.036px;font-weight:400;">Windows 10 Home</div>
<div class="t" style="left:993.0px;top:858.00px;font-size:13.5px;line-height:13.5px;color:#5a5a5a;letter-spacing:0.405px;font-weight:400;">00-1B-4F-01-68-02</div>
<div class="t" style="left:1168.3px;top:858.00px;font-size:13.5px;line-height:13.5px;color:#5a5a5a;letter-spacing:0.093px;font-weight:400;">192.178.167.2/24</div>
<div class="t" style="left:1350.8px;top:858.00px;font-size:13.5px;line-height:13.5px;color:#5a5a5a;letter-spacing:0.292px;font-weight:400;">1/9/10</div>
<div class="t" style="left:1500px;width:66.5px;text-align:right;top:858px;font-size:12px;line-height:12px;color:#444;letter-spacing:-0.5px">10%</div>
<div class="r" style="left:1469px;top:876px;width:18px;height:20px;background:#7fbf6e;"></div>
<div class="t" style="left:86.7px;top:880.00px;font-size:13.5px;line-height:13.5px;color:#5a5a5a;letter-spacing:-0.080px;font-weight:400;">University Campus</div>
<div class="t" style="left:225.0px;top:880.00px;font-size:13.5px;line-height:13.5px;color:#5a5a5a;letter-spacing:-0.312px;font-weight:400;">3. Floor</div>
<div class="t" style="left:335.5px;top:880.00px;font-size:13.5px;line-height:13.5px;color:#5a5a5a;letter-spacing:0.131px;font-weight:400;">3001</div>
<div class="t" style="left:494.3px;top:880.00px;font-size:13.5px;line-height:13.5px;color:#5a5a5a;letter-spacing:-0.200px;font-weight:400;">Standard-PC</div>
<div class="t" style="left:624.2px;top:878.00px;font-size:13.5px;line-height:13.5px;color:#1e1e1e;letter-spacing:-0.129px;font-weight:400;">PC-2.F-923</div>
<div class="t" style="left:787.4px;top:880.00px;font-size:13.5px;line-height:13.5px;color:#5a5a5a;letter-spacing:0.036px;font-weight:400;">Windows 10 Home</div>
<div class="t" style="left:993.0px;top:880.00px;font-size:13.5px;line-height:13.5px;color:#5a5a5a;letter-spacing:0.405px;font-weight:400;">00-1B-4F-01-68-01</div>
<div class="t" style="left:1168.3px;top:880.00px;font-size:13.5px;line-height:13.5px;color:#5a5a5a;letter-spacing:0.093px;font-weight:400;">192.178.167.1/24</div>
<div class="t" style="left:1350.8px;top:880.00px;font-size:13.5px;line-height:13.5px;color:#5a5a5a;letter-spacing:0.292px;font-weight:400;">1/9/10</div>
<div class="t" style="left:1500px;width:66.5px;text-align:right;top:880px;font-size:12px;line-height:12px;color:#444;letter-spacing:-0.5px">10%</div>
<div class="r" style="left:1469px;top:898px;width:18px;height:1px;background:#7fbf6e;"></div>
<div class="r" style="left:625px;top:902px;width:158px;height:32px;background:#fff;border:1px solid #c8c8c8;box-sizing:border-box"></div>
<div class="t" style="left:632.0px;top:912.00px;font-size:13.5px;line-height:13.5px;color:#222;letter-spacing:-0.066px;font-weight:400;">516</div>
<svg class="r" style="left:76px;top:947px" width="290" height="22" viewBox="0 0 290 22"><path d="M3.2 6.3 L12.4 13.8 M12.4 6.3 L3.2 13.8" stroke="#6e6e6e" stroke-width="2.1" stroke-linecap="round"/><rect x="20.9" y="2.2" width="14.8" height="14.8" rx="0.8" fill="none" stroke="#a6a6a6" stroke-width="1.4"/><path d="M23.4 10 L26.3 12.7 L33.7 5.3" fill="none" stroke="#a0a0a0" stroke-width="1.3"/><circle cx="265.4" cy="9.6" r="8.7" fill="none" stroke="#e0e0e0" stroke-width="1.5"/><path d="M260.4 6.5 Q265.3 7.8 270.2 6.5 L266 11.5 L264.6 11.5 Z" fill="#cfcfcf"/><ellipse cx="265.3" cy="6.2" rx="5" ry="1.9" fill="#dedede"/><rect x="264.6" y="11" width="1.5" height="4" fill="#d6d6d6"/></svg>
<div class="t" style="left:123.5px;top:951.00px;font-size:13.5px;line-height:13.5px;color:#505050;letter-spacing:-0.095px;font-weight:400;">(Room does not contain PC-Pool)</div>
<div class="r" style="left:1782px;top:942px;width:83px;height:30px;background:#3d3d3d;"></div>
<div class="t" style="left:1788.5px;top:950.00px;font-size:13.5px;line-height:13.5px;color:#fff;letter-spacing:-0.339px;font-weight:400;">Customize...</div>
<div class="r" style="left:44px;top:1001px;width:1872px;height:39px;background:#d0d0d0;"></div>
<div class="r" style="left:1516px;top:1011px;width:122px;height:24px;background:#3d3d3d;"></div>
<div class="r" style="left:1651px;top:1011px;width:122px;height:24px;background:#7a7a7a;"></div>
<div class="r" style="left:1785px;top:1011px;width:122px;height:24px;background:#e84a41;"></div>
<div class="t" style="left:1557.5px;top:1016.00px;font-size:13.5px;line-height:13.5px;color:#fff;letter-spacing:-0.686px;font-weight:400;"><u>C</u>ancel</div>
<div class="t" style="left:1694.2px;top:1016.00px;font-size:13.5px;line-height:13.5px;color:#a8a8a8;letter-spacing:0.055px;font-weight:400;"><u>A</u>pply</div>
<div class="t" style="left:1837.2px;top:1016.00px;font-size:13.5px;line-height:13.5px;color:#fff;letter-spacing:-0.166px;font-weight:400;"><u>O</u>k</div>
</body></html>
